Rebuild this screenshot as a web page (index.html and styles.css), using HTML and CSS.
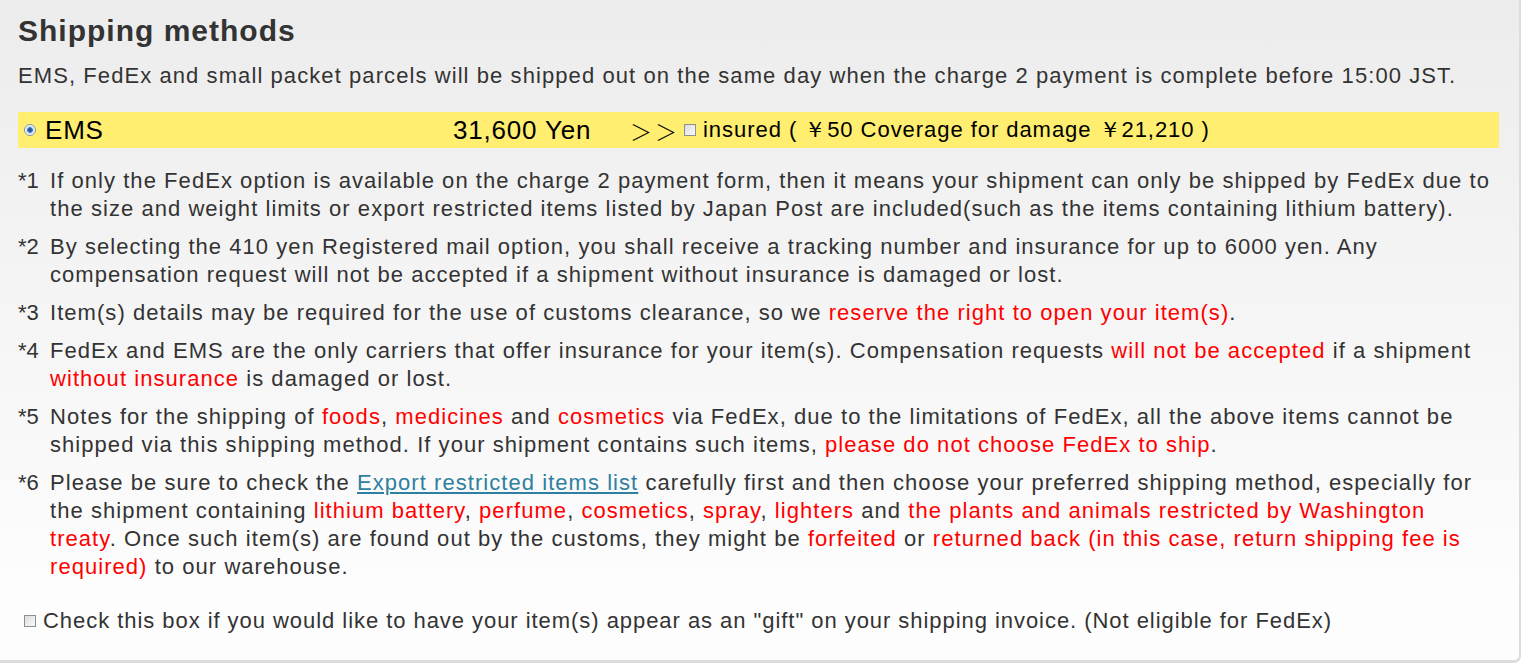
FILE: index.html
```html
<!doctype html>
<html lang="en">
<head>
<meta charset="utf-8">
<title>Shipping methods</title>
<link rel="stylesheet" href="styles.css">
</head>
<body>
  <div class="panel">
    <h2 class="title">Shipping methods</h2>
    <p class="lead">EMS, FedEx and small packet parcels will be shipped out on the same day when the charge 2 payment is complete before 15:00 JST.</p>

    <div class="method">
      <label class="method_name"><span class="radio"></span>EMS</label>
      <span class="method_price">31,600 Yen</span>
      <span class="arrows">＞＞</span>
      <label class="insured"><span class="check"></span>insured ( ￥50 Coverage for damage ￥21,210 )</label>
    </div>

    <ul class="notes">
      <li><span class="num">*1</span><span class="txt">If only the FedEx option is available on the charge 2 payment form, then it means your shipment can only be shipped by FedEx due to the size and weight limits or export restricted items listed by Japan Post are included(such as the items containing lithium battery).</span></li>
      <li><span class="num">*2</span><span class="txt">By selecting the 410 yen Registered mail option, you shall receive a tracking number and insurance for up to 6000 yen. Any compensation request will not be accepted if a shipment without insurance is damaged or lost.</span></li>
      <li><span class="num">*3</span><span class="txt">Item(s) details may be required for the use of customs clearance, so we <em class="red">reserve the right to open your item(s)</em>.</span></li>
      <li><span class="num">*4</span><span class="txt">FedEx and EMS are the only carriers that offer insurance for your item(s). Compensation requests <em class="red">will not be accepted</em> if a shipment <em class="red">without insurance</em> is damaged or lost.</span></li>
      <li><span class="num">*5</span><span class="txt">Notes for the shipping of <em class="red">foods</em>, <em class="red">medicines</em> and <em class="red">cosmetics</em> via FedEx, due to the limitations of FedEx, all the above items cannot be shipped via this shipping method. If your shipment contains such items, <em class="red">please do not choose FedEx to ship</em>.</span></li>
      <li><span class="num">*6</span><span class="txt">Please be sure to check the <a href="#" class="link">Export restricted items list</a> carefully first and then choose your preferred shipping method, especially for the shipment containing <em class="red">lithium battery</em>, <em class="red">perfume</em>, <em class="red">cosmetics</em>, <em class="red">spray</em>, <em class="red">lighters</em> and <em class="red">the plants and animals restricted by Washington treaty</em>. Once such item(s) are found out by the customs, they might be <em class="red">forfeited</em> or <em class="red">returned back (in this case, return shipping fee is required)</em> to our warehouse.</span></li>
    </ul>

    <label class="gift"><span class="check"></span>Check this box if you would like to have your item(s) appear as an "gift" on your shipping invoice. (Not eligible for FedEx)</label>
  </div>
</body>
</html>
```

FILE: styles.css
```css
* {
  margin: 0;
  padding: 0;
  list-style: none;
  box-sizing: border-box;
}
body {
  background-color: #fff;
  font-family: "Liberation Sans", Arial, sans-serif;
  color: #333;
}
.panel {
  width: 1521px;
  height: 663px;
  padding: 13px 20px 0 18px;
  background: linear-gradient(#ececec, #fdfdfd 90%);
  border-right: 2px solid #dcdcdc;
  border-bottom: 3px solid #dcdcdc;
  border-bottom-right-radius: 7px;
}
.title {
  font-size: 30px;
  line-height: 36px;
  letter-spacing: 1px;
  font-weight: bold;
  color: #333;
}
.lead {
  margin-top: 13px;
  font-size: 22px;
  letter-spacing: 1.08px;
  line-height: 28px;
}
.method {
  display: flex;
  align-items: center;
  height: 36px;
  margin-top: 22px;
  padding-left: 6px;
  background-color: #ffee6f;
  color: #000;
}
.method_name {
  display: flex;
  align-items: center;
  width: 429px;
  font-size: 26px;
  letter-spacing: 0.8px;
}
.method_price {
  width: 177px;
  font-size: 26px;
  letter-spacing: 0.8px;
}
.arrows {
  margin-right: 4px;
  font-family: "Noto Sans CJK JP", sans-serif;
  font-weight: 300;
  font-size: 22px;
  letter-spacing: 3px;
  color: #000;
}
.insured {
  display: flex;
  align-items: center;
  font-size: 22px;
  letter-spacing: 0.95px;
}
.radio {
  width: 12px;
  height: 12px;
  margin-right: 9px;
  border-radius: 50%;
  border: 1px solid #8a97a8;
  background: radial-gradient(circle, #1d3f7c 0, #3b76c4 35%, #cfe0f2 45%, #f6f6f6 70%);
}
.check {
  width: 12px;
  height: 12px;
  margin-right: 7px;
  border: 1px solid #8f8f8f;
  background: linear-gradient(135deg, #dcdcdc, #fafafa);
}
.notes {
  margin-top: 19px;
  font-size: 22px;
  letter-spacing: 1.05px;
  line-height: 28px;
}
.notes li {
  display: flex;
  margin-bottom: 10px;
}
.num {
  flex: none;
  width: 32px;
  letter-spacing: 0;
}
.red {
  font-style: normal;
  color: #f00;
}
.link {
  color: #2e7fa0;
}
.gift {
  display: flex;
  align-items: center;
  margin-top: 26px;
  padding-left: 6px;
  font-size: 22px;
  letter-spacing: 0.95px;
  line-height: 28px;
}
```
